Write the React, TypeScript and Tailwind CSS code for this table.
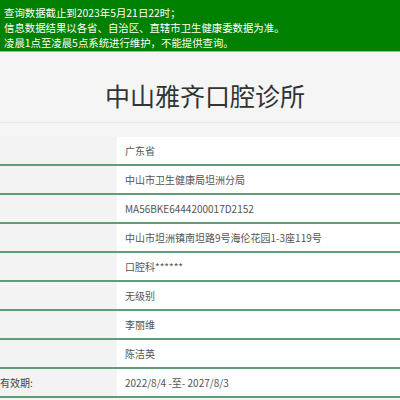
const rows: { label: string; value: string }[] = [
  { label: '', value: '广东省' },
  { label: '', value: '中山市卫生健康局坦洲分局' },
  { label: '', value: 'MA56BKE6444200017D2152' },
  { label: '', value: '中山市坦洲镇南坦路9号海伦花园1-3座119号' },
  { label: '', value: '口腔科******' },
  { label: '', value: '无级别' },
  { label: '', value: '李丽维' },
  { label: '', value: '陈洁英' },
  { label: '医疗机构执业许可证有效期:', value: '2022/8/4 -至- 2027/8/3' },
];

export default function App() {
  return (
    <div className="w-[400px] h-[400px] overflow-hidden bg-[#f5f5f5] font-['Microsoft_YaHei','Noto_Sans_CJK_SC',sans-serif]">
      <div className="h-[52px] bg-[#008000] border-b border-[#8fc48f] px-[4px] pt-[5px] text-[10.4px] leading-[15px] text-white">
        <p>查询数据截止到2023年5月21日22时；</p>
        <p>信息数据结果以各省、自治区、直辖市卫生健康委数据为准。</p>
        <p>凌晨1点至凌晨5点系统进行维护，不能提供查询。</p>
      </div>

      <div className="pt-[28px] pb-[12px] pl-[10px] text-center text-[25px] leading-[30px] text-[#333] border-b border-[#e8e8e8]">
        中山雅齐口腔诊所
      </div>

      <div className="mt-[14px] ml-[-90px] w-[490px]">
        {rows.map((row) => (
          <div key={row.value} className="flex h-[29px] border-b-2 border-[#5e9e77]">
            <div className="w-[207px] shrink-0 bg-[#f3f3f3] flex items-center whitespace-nowrap text-[10px] text-[#444]">
              {row.label}
            </div>
            <div className="flex-1 bg-white flex items-center pl-[8px] whitespace-nowrap text-[10px] text-[#555]">
              {row.value}
            </div>
          </div>
        ))}
      </div>
    </div>
  );
}
